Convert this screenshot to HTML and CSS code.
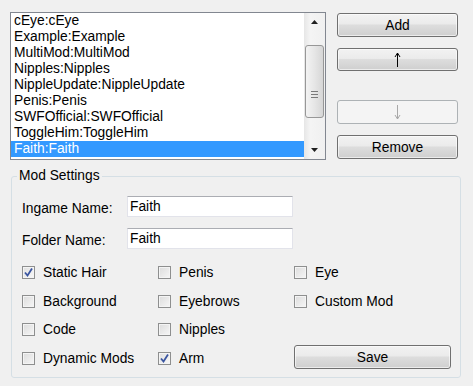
FILE: index.html
```html
<!DOCTYPE html>
<html>
<head>
    <title>Mod Manager</title>
    <link rel="stylesheet" href="styles.css">
</head>
<body>
    <div class="window">
        <div class="top">
            <div class="listbox">
                <ul class="items">
                    <li>cEye:cEye</li>
                    <li>Example:Example</li>
                    <li>MultiMod:MultiMod</li>
                    <li>Nipples:Nipples</li>
                    <li>NippleUpdate:NippleUpdate</li>
                    <li>Penis:Penis</li>
                    <li>SWFOfficial:SWFOfficial</li>
                    <li>ToggleHim:ToggleHim</li>
                    <li class="selected">Faith:Faith</li>
                </ul>
                <div class="scrollbar">
                    <div class="arrow">
                        <svg width="7" height="4" viewBox="0 0 7 4"><path d="M0 4 L3.5 0 L7 4 Z" fill="#202020"/></svg>
                    </div>
                    <div class="track">
                        <div class="thumb">
                            <svg width="7" height="7" viewBox="0 0 7 7">
                                <path d="M0 0.5 H7 M0 3.5 H7 M0 6.5 H7" stroke="#7a7a7a" stroke-width="1"/>
                            </svg>
                        </div>
                    </div>
                    <div class="arrow">
                        <svg width="7" height="4" viewBox="0 0 7 4"><path d="M0 0 L7 0 L3.5 4 Z" fill="#202020"/></svg>
                    </div>
                </div>
            </div>
            <div class="buttons">
                <button class="btn">Add</button>
                <button class="btn up" title="Move up">
                    <svg width="7" height="15" viewBox="0 0 7 15"><path d="M3.5 1 V15 M3.5 1 L1 5 M3.5 1 L6 5" fill="none" stroke="#000" stroke-width="1"/></svg>
                </button>
                <button class="btn down" title="Move down" disabled>
                    <svg width="7" height="15" viewBox="0 0 7 15"><path d="M3.5 0 V14 M3.5 14 L1 10 M3.5 14 L6 10" fill="none" stroke="#a8a8a8" stroke-width="1"/></svg>
                </button>
                <button class="btn remove">Remove</button>
            </div>
        </div>

        <fieldset class="group">
            <legend>Mod Settings</legend>
            <div class="fields">
                <label for="ingame">Ingame Name:</label>
                <input id="ingame" type="text" value="Faith">
                <label for="folder">Folder Name:</label>
                <input id="folder" type="text" value="Faith">
            </div>
            <div class="checks">
                <div class="check"><span class="box on"><svg width="9" height="9" viewBox="0 0 9 9"><path d="M1 4.5 L3.5 7.5 L8 0.5" fill="none" stroke="#3a55a0" stroke-width="1.8"/></svg></span>Static Hair</div>
                <div class="check"><span class="box"></span>Penis</div>
                <div class="check"><span class="box"></span>Eye</div>
                <div class="check"><span class="box"></span>Background</div>
                <div class="check"><span class="box"></span>Eyebrows</div>
                <div class="check"><span class="box"></span>Custom Mod</div>
                <div class="check"><span class="box"></span>Code</div>
                <div class="check"><span class="box"></span>Nipples</div>
                <div class="check"></div>
                <div class="check"><span class="box"></span>Dynamic Mods</div>
                <div class="check"><span class="box on"><svg width="9" height="9" viewBox="0 0 9 9"><path d="M1 4.5 L3.5 7.5 L8 0.5" fill="none" stroke="#3a55a0" stroke-width="1.8"/></svg></span>Arm</div>
                <div class="check"><button class="btn save">Save</button></div>
            </div>
        </fieldset>
    </div>
</body>
</html>
```

FILE: styles.css
```css
body {
    margin: 0;
    background: #f0f0f0;
    font-family: "Liberation Sans", Arial, sans-serif;
    font-size: 13.8px;
    color: #000;
}
.window {
    width: 473px;
    height: 386px;
    padding: 12px 0 0 10px;
    box-sizing: border-box;
}
.top {
    display: flex;
    gap: 11px;
}
.listbox {
    display: flex;
    width: 316px;
    height: 148px;
    border: 1px solid #828790;
    background: #fff;
    box-sizing: border-box;
}
.items {
    flex: 1;
    margin: 0;
    padding: 0;
    list-style: none;
    overflow: hidden;
}
.items li {
    height: 16px;
    line-height: 16px;
    padding-left: 3px;
    white-space: nowrap;
}
.items li.selected {
    background: #3399ff;
    color: #fff;
}
.scrollbar {
    width: 21px;
    display: flex;
    flex-direction: column;
    background: linear-gradient(to right, #e6e6e6, #f4f4f4 30%, #f0f0f0);
}
.arrow {
    height: 18px;
    display: flex;
    align-items: center;
    justify-content: center;
}
.track {
    flex: 1;
    padding: 14px 1px 0 1px;
}
.thumb {
    height: 73px;
    border: 1px solid #979797;
    border-radius: 3px;
    background: linear-gradient(to right, #f3f3f3, #e6e6e6 50%, #d6d6d6);
    box-sizing: border-box;
    display: flex;
    align-items: center;
    justify-content: center;
    padding-top: 26px;
}
.buttons {
    display: flex;
    flex-direction: column;
    width: 121px;
    padding-top: 1px;
}
.btn {
    height: 24px;
    font-family: inherit;
    font-size: 13.8px;
    color: #000;
    border: 1px solid #707070;
    border-radius: 3px;
    background: linear-gradient(to bottom, #f2f2f2, #ebebeb 45%, #dddddd 50%, #cfcfcf);
    box-shadow: inset 0 0 0 1px rgba(255, 255, 255, 0.6);
    padding: 0;
    display: flex;
    align-items: center;
    justify-content: center;
}
.btn.up {
    margin-top: 11px;
    height: 23px;
}
.btn.down {
    margin-top: 29px;
    color: #a8a8a8;
    border-color: #adb2b5;
    background: #f4f4f4;
    box-shadow: none;
}
.btn.remove {
    margin-top: 11px;
}
.group {
    margin: 8px 0 0 1px;
    width: 450px;
    padding: 12px 0 4px 9px;
    border: 1px solid #d5dfe5;
    border-radius: 3px;
    box-sizing: border-box;
}
.group legend {
    margin-left: -4px;
    padding: 0 2px;
    line-height: 16px;
}
.fields {
    display: grid;
    grid-template-columns: 106px 166px;
    grid-auto-rows: 21px;
    row-gap: 11px;
    align-items: center;
}
.fields label {
    padding-left: 1px;
    padding-top: 3px;
}
.fields input {
    height: 21px;
    box-sizing: border-box;
    border: 1px solid #e2e3ea;
    border-top-color: #abadb3;
    background: #fff;
    font-family: inherit;
    font-size: 13.8px;
    padding: 0 0 0 2px;
    margin: 0;
    outline: none;
}
.checks {
    display: grid;
    grid-template-columns: 136px 136px 160px;
    grid-template-rows: 29px 28px 29px 29px;
    margin-top: 9px;
}
.check {
    display: flex;
    align-items: center;
    gap: 8px;
    padding-left: 1px;
}
.box {
    width: 13px;
    height: 13px;
    border: 1px solid #8e8f8f;
    box-sizing: border-box;
    background: linear-gradient(135deg, #dcdcdc, #f6f6f6);
    box-shadow: inset 0 0 0 1px #f4f4f4;
    display: flex;
    align-items: center;
    justify-content: center;
}
.box.on {
    background: linear-gradient(135deg, #e0e0e0, #f8f8f8);
}
.btn.save {
    width: 157px;
    margin-top: -3px;
}
```
